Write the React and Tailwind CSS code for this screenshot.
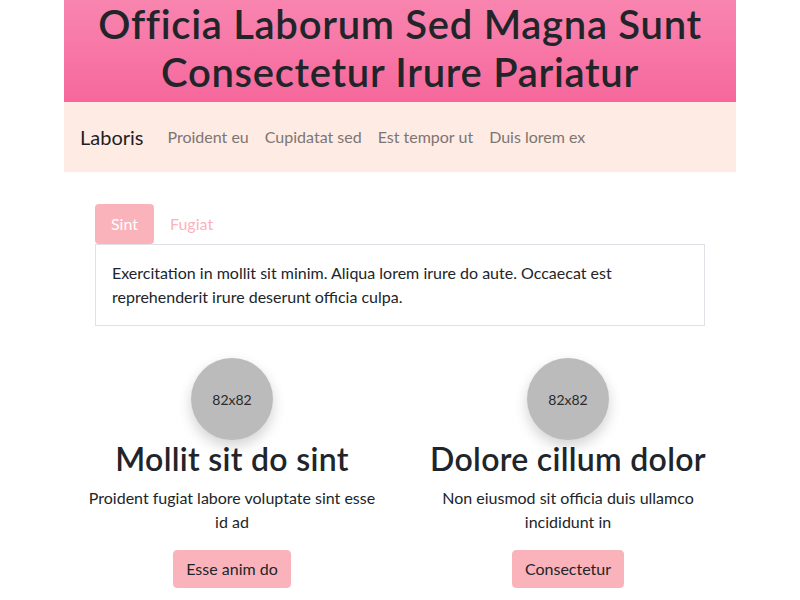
const navLinks = ["Proident eu", "Cupidatat sed", "Est tempor ut", "Duis lorem ex"];

const features = [
  {
    title: "Mollit sit do sint",
    text: "Proident fugiat labore voluptate sint esse id ad",
    button: "Esse anim do",
  },
  {
    title: "Dolore cillum dolor",
    text: "Non eiusmod sit officia duis ullamco incididunt in",
    button: "Consectetur",
  },
];

function Feature({ item }) {
  return (
    <div className="flex flex-col items-center text-center">
      <div className="w-[82px] h-[82px] rounded-full bg-[#bbbbbb] flex items-center justify-center text-[14px] text-[#2a2a2a] shadow-[0_6px_14px_rgba(0,0,0,0.18)]">
        82x82
      </div>
      <h2 className="text-[32px] leading-[38px] font-semibold tracking-[0.3px] text-[#212529]">
        {item.title}
      </h2>
      <p className="mt-2 max-w-[296px] text-[16px] leading-6 text-[#212529]">
        {item.text}
      </p>
      <button
        type="button"
        className="mt-4 px-3 py-1.5 rounded border border-[#fbb3bb] bg-[#fbb3bb] text-[16px] leading-6 text-[#212529]"
      >
        {item.button}
      </button>
    </div>
  );
}

export default function App() {
  return (
    <div className="min-h-screen bg-white text-[#212529] font-['Lato',sans-serif]">
      <div className="mx-auto w-[672px]">
        {/* Header */}
        <header className="bg-gradient-to-b from-[#f885af] to-[#f6679c] pb-1.5">
          <h1 className="text-center text-[40px] leading-[48px] font-semibold tracking-[0.7px] text-[#212529]">
            Officia Laborum Sed Magna Sunt
            <br />
            Consectetur Irure Pariatur
          </h1>
        </header>

        {/* Navbar */}
        <nav className="h-[70px] bg-[#feebe4] flex items-center px-4">
          <span className="text-[20px] text-[#1f1f1f] mr-4">Laboris</span>
          <ul className="flex">
            {navLinks.map((l) => (
              <li key={l} className="px-2 text-[16px] text-[#7d7572]">
                {l}
              </li>
            ))}
          </ul>
        </nav>

        {/* Tabs */}
        <div className="mt-8 mx-[31px]">
          <div className="flex">
            <span className="px-4 py-2 leading-6 rounded bg-[#fbb3bb] text-white text-[16px]">Sint</span>
            <span className="px-4 py-2 leading-6 text-[#fbb3bb] text-[16px]">Fugiat</span>
          </div>
          <div className="border border-[#dee2e6] p-4 text-[16px] leading-6">
            Exercitation in mollit sit minim. Aliqua lorem irure do aute. Occaecat est
            reprehenderit irure deserunt officia culpa.
          </div>
        </div>

        {/* Features */}
        <div className="mt-8 grid grid-cols-2">
          {features.map((f) => (
            <Feature key={f.title} item={f} />
          ))}
        </div>
      </div>
    </div>
  );
}
